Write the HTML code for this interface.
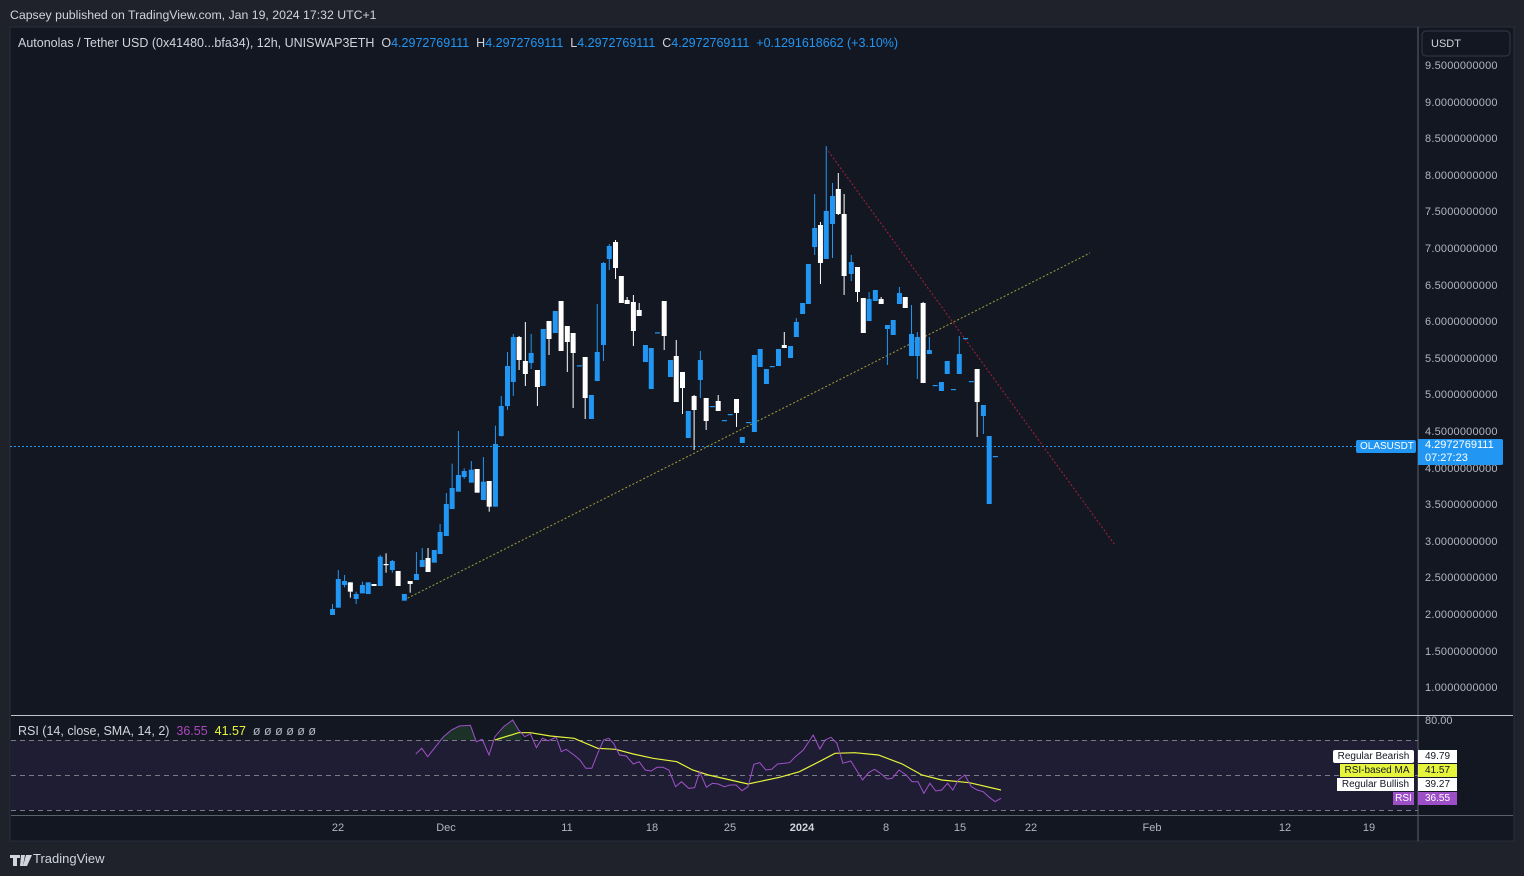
<!DOCTYPE html>
<html><head><meta charset="utf-8"><style>
*{margin:0;padding:0;box-sizing:border-box}
body{width:1524px;height:876px;background:#1f222b;font-family:"Liberation Sans",sans-serif;overflow:hidden;position:relative;color:#d1d4dc}
.t{position:absolute;white-space:nowrap}
</style></head><body>
<div class="t" style="left:10px;top:8px;font-size:12.3px;color:#d1d4dc">Capsey published on TradingView.com, Jan 19, 2024 17:32 UTC+1</div>
<svg id="s" width="1524" height="876" style="position:absolute;left:0;top:0">
<rect x="10" y="27" width="1504" height="814" fill="#131722" stroke="#2a2e39"/>
<rect x="11" y="740" width="1407" height="70" fill="#1e1d33"/>
<line x1="1418" y1="27" x2="1418" y2="841" stroke="#5d606b"/>
<line x1="11" y1="715.5" x2="1513" y2="715.5" stroke="#c0c3cc"/>
<line x1="11" y1="815.5" x2="1513" y2="815.5" stroke="#5d606b"/>
<g stroke="#787b86" stroke-dasharray="5,4"><line x1="11" y1="740.5" x2="1418" y2="740.5"/><line x1="11" y1="775.5" x2="1418" y2="775.5"/><line x1="11" y1="810.5" x2="1418" y2="810.5"/></g>
<line x1="10" y1="446.5" x2="1418" y2="446.5" stroke="#2196f3" stroke-dasharray="2,2"/>
<line x1="404" y1="600" x2="1090" y2="253" stroke="#c8c040" stroke-dasharray="2,2" opacity=".8"/>
<line x1="826" y1="148" x2="1115" y2="545" stroke="#d02040" stroke-dasharray="2,2" opacity=".8"/>
<rect x="1422" y="31" width="88" height="25" rx="4" fill="#131722" stroke="#363a45"/>
<g id="c"></g><g id="r"></g>
<path d="M10 855h10v3h-3v8h-4v-8h-3z M21 855h4l-2 11h-3z M26 855h6l-5 11h-4z" fill="#d1d4dc"/>
</svg>
<div class="t" style="left:18px;top:36px;font-size:12.5px;color:#d1d4dc">Autonolas / Tether USD (0x41480...bfa34), 12h, UNISWAP3ETH &nbsp;O<span style="color:#2196f3">4.2972769111</span> &nbsp;H<span style="color:#2196f3">4.2972769111</span> &nbsp;L<span style="color:#2196f3">4.2972769111</span> &nbsp;C<span style="color:#2196f3">4.2972769111 &nbsp;+0.1291618662 (+3.10%)</span></div>
<div class="t" style="left:1431px;top:38px;font-size:11px;color:#d1d4dc">USDT</div>
<div id="pl"></div>
<div class="t" style="left:1356px;top:440px;width:60px;height:13px;background:#2196f3;border-radius:2px;font-size:10px;color:#fff;padding-left:4px;line-height:13px">OLASUSDT</div>
<div class="t" style="left:1418px;top:439px;width:85px;height:26px;background:#2196f3;border-radius:0 2px 2px 0;font-size:11px;color:#fff;padding-left:7px;line-height:13px">4.2972769111<br>07:27:23</div>
<div class="t" style="left:18px;top:724px;font-size:12.5px;color:#d1d4dc">RSI (14, close, SMA, 14, 2) &nbsp;<span style="color:#ab47bc">36.55</span> &nbsp;<span style="color:#e6f53b">41.57</span> &nbsp;<span style="color:#b2b5be">ø ø ø ø ø ø</span></div>
<div class="t" style="left:1425px;top:715px;font-size:11px;color:#b2b5be">80.00</div>
<div style="position:absolute;left:1333px;top:750px;font-size:10px;line-height:13px;color:#131722">
<div style="position:absolute;left:0;top:0;width:81px;height:13px;background:#fff;border-radius:2px;text-align:center">Regular Bearish</div>
<div style="position:absolute;left:85px;top:0;width:39px;height:13px;background:#fff;text-align:center">49.79</div>
<div style="position:absolute;left:7px;top:14px;width:74px;height:13px;background:#e6f53b;text-align:center">RSI-based MA</div>
<div style="position:absolute;left:85px;top:14px;width:39px;height:13px;background:#e6f53b;text-align:center">41.57</div>
<div style="position:absolute;left:4px;top:28px;width:77px;height:13px;background:#fff;text-align:center">Regular Bullish</div>
<div style="position:absolute;left:85px;top:28px;width:39px;height:13px;background:#fff;text-align:center">39.27</div>
<div style="position:absolute;left:60px;top:42px;width:21px;height:13px;background:#9c4fc7;color:#fff;text-align:center">RSI</div>
<div style="position:absolute;left:85px;top:42px;width:39px;height:13px;background:#9c4fc7;color:#fff;text-align:center">36.55</div>
</div>
<div id="tl"></div>
<div class="t" style="left:33px;top:851px;font-size:13px;color:#d1d4dc">TradingView</div>
<script>
var ns="http://www.w3.org/2000/svg",c=document.getElementById("c");
function el(t,a,p){var e=document.createElementNS(ns,t);for(var k in a)e.setAttribute(k,a[k]);(p||c).appendChild(e);return e}
var D=[[28,1407,1425,1392,1425,0],[41,1317,1403,1290,1403,0],[55,1323,1335,1305,1342,0],[68,1327,1355,1327,1373,1],[81,1362,1377,1355,1392,0],[95,1335,1360,1325,1360,0],[108,1327,1362,1327,1362,0],[121,1332,1338,1332,1338,1],[135,1250,1338,1245,1338,0],[148,1272,1275,1240,1298,1],[162,1263,1290,1260,1298,0],[175,1293,1338,1293,1338,1],[189,1362,1382,1362,1382,0],[202,1323,1332,1323,1358,1],[216,1302,1320,1236,1320,0],[229,1260,1281,1224,1281,0],[242,1254,1296,1224,1296,1],[256,1230,1268,1230,1268,0],[269,1176,1242,1152,1242,0],[283,1092,1188,1059,1188,0],[296,1044,1107,971,1107,0],[310,1005,1055,873,1055,0],[323,993,1011,985,1017,0],[339,989,1028,963,1028,0],[352,987,1058,987,1058,1],[366,1025,1080,951,1080,0],[379,1023,1100,1023,1115,1],[393,912,1100,857,1100,0],[406,798,888,768,890,0],[420,678,798,636,810,0],[433,591,726,582,768,0],[446,591,660,588,690,1],[460,663,702,546,738,1],[473,639,669,582,687,0],[487,690,741,690,798,1],[500,567,738,567,738,0],[513,543,597,543,645,1],[527,513,579,513,579,0],[540,483,633,483,633,1],[554,558,606,558,696,1],[567,579,639,579,804,1],[581,676,678,676,678,0],[594,651,774,651,837,1],[608,765,837,765,837,0],[621,636,723,492,723,0],[635,369,615,366,663,0],[648,318,357,312,390,0],[662,306,384,300,417,1],[675,408,489,408,489,1],[688,480,492,471,492,1],[702,486,573,465,618,1],[715,510,528,489,528,1],[729,615,666,615,666,0],[742,624,747,624,747,0],[756,577,579,577,579,0],[771,483,588,483,630,1],[785,660,711,660,711,0],[798,648,786,600,786,1],[812,696,744,696,822,1],[825,813,894,813,894,0],[838,768,810,765,930,1],[852,660,720,633,774,0],[865,774,843,774,870,1],[879,798,801,798,801,0],[892,783,813,765,813,1],[906,840,843,840,843,0],[919,822,825,822,825,0],[933,777,819,777,861,1],[946,891,909,891,909,0],[960,846,849,846,849,0],[973,645,876,645,876,0],[986,627,681,627,681,0],[1000,687,732,687,732,0],[1013,678,681,678,681,0],[1027,627,678,627,678,0],[1040,615,624,576,624,1],[1054,618,654,618,654,0],[1067,546,591,534,591,0],[1081,489,522,489,522,0],[1094,372,492,372,492,0],[1108,264,321,162,345,0],[1121,255,369,246,432,1],[1134,213,357,18,357,0],[1148,168,252,129,354,0],[1161,147,222,99,225,1],[1174,222,408,162,465,1],[1190,366,402,345,423,0],[1204,381,456,381,486,1],[1217,474,579,474,579,1],[1230,477,543,456,543,0],[1244,450,483,450,483,0],[1257,477,492,471,492,1],[1271,555,567,555,675,0],[1284,540,585,540,585,0],[1298,459,492,441,492,0],[1311,471,504,471,504,1],[1325,582,648,495,648,0],[1338,591,648,576,717,0],[1351,489,729,486,729,1],[1365,630,642,591,642,0],[1378,735,738,735,738,0],[1392,726,753,726,753,0],[1405,663,702,663,702,0],[1419,747,750,747,750,0],[1432,642,702,588,702,0],[1446,594,597,594,597,0],[1459,723,726,723,726,0],[1472,687,786,687,891,1],[1486,795,828,795,882,0],[1499,888,1092,888,1092,0],[1513,948,951,948,951,0]];
D.forEach(function(d){var x=320+d[0]*700/1568,Y=function(v){return 140+v/3},col=d[5]?"#ffffff":"#2196f3";
el("line",{x1:x,x2:x,y1:Y(d[3]),y2:Y(d[4]),stroke:col,"stroke-width":1});
el("rect",{x:x-2.5,y:Y(d[1]),width:5,height:Math.max(1.2,Y(d[2])-Y(d[1])),fill:col});});
function pts(a){return a.map(function(p){return (400+p[0]/2.529).toFixed(1)+","+(710+p[1]/3).toFixed(1)}).join(" ")}
var P=[[40,132],[55,115],[70,140],[90,110],[110,80],[130,60],[150,48],[178,46],[193,95],[208,88],[225,135],[240,80],[262,50],[285,30],[300,60],[315,80],[330,72],[345,113],[360,85],[375,92],[395,82],[408,125],[420,118],[440,135],[455,150],[470,175],[485,175],[500,130],[515,90],[528,85],[540,100],[555,135],[572,138],[590,162],[605,155],[620,180],[635,183],[650,172],[665,172],[680,180],[697,230],[712,215],[730,235],[745,233],[758,185],[775,232],[790,220],[805,222],[820,230],[835,225],[850,225],[865,242],[880,230],[895,163],[910,158],[925,180],[940,178],[955,162],[985,158],[1000,140],[1020,120],[1045,75],[1062,117],[1075,90],[1090,82],[1105,100],[1120,160],[1140,153],[1170,210],[1185,188],[1200,178],[1215,190],[1232,207],[1245,205],[1262,180],[1280,195],[1295,215],[1310,215],[1325,250],[1340,220],[1355,243],[1370,240],[1385,220],[1398,240],[1412,210],[1428,195],[1445,230],[1460,240],[1475,245],[1490,262],[1505,275],[1520,265]];
var Yl=[[240,90],[300,68],[330,68],[380,78],[440,85],[500,115],[545,118],[590,132],[640,145],[700,155],[740,180],[780,195],[880,222],[960,202],[1010,185],[1060,155],[1100,130],[1150,128],[1210,135],[1270,162],[1320,195],[1370,210],[1440,218],[1520,240]];
el("polygon",{points:pts([[100,90],[110,80],[130,60],[150,48],[178,46],[190,90]]),fill:"#1f3a2c",opacity:.8});
el("polygon",{points:pts([[244,90],[262,50],[285,30],[300,60],[310,90]]),fill:"#1f3a2c",opacity:.8});
el("polyline",{points:pts(Yl),fill:"none",stroke:"#e6f53b","stroke-width":1.2});
el("polyline",{points:pts(P),fill:"none",stroke:"#a051c9","stroke-width":1});
var h="";for(var i=0;i<18;i++){var v=9.5-i*0.5;h+='<div class="t" style="left:1425px;top:'+(60+i*36.6).toFixed(1)+'px;font-size:11px;letter-spacing:0.2px;color:#b2b5be">'+v.toFixed(10)+'</div>';}
document.getElementById("pl").innerHTML=h;
var T=[["22",338],["Dec",446],["11",567],["18",652],["25",730],["2024",802],["8",886],["15",960],["22",1031],["Feb",1152],["12",1285],["19",1369]];
document.getElementById("tl").innerHTML=T.map(function(t){return '<div class="t" style="left:'+(t[1]-20)+'px;width:40px;text-align:center;top:822px;font-size:11px;color:#b2b5be;'+(t[0]=="2024"?"font-weight:bold;color:#d1d4dc":"")+'">'+t[0]+'</div>'}).join("");
</script>
</body></html>
